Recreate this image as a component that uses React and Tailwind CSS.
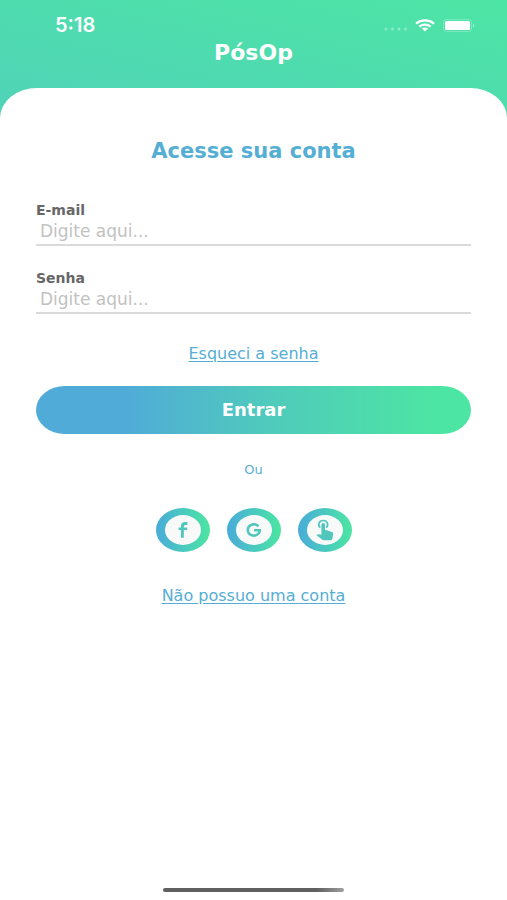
import { useState } from "react";

function StatusBar() {
  return (
    <div className="flex h-10 items-center justify-between pt-[10px] pr-8 pl-[55px] text-white">
      <span className="font-['Inter',sans-serif] text-xl leading-5 font-semibold">5:18</span>
      <div className="flex items-center gap-2">
        <svg width="24" height="12" viewBox="0 0 24 12" fill="#fff" opacity="0.35">
          <circle cx="3" cy="10" r="1.500" />
          <circle cx="9.500" cy="10" r="1.500" />
          <circle cx="16" cy="10" r="1.500" />
          <circle cx="22.500" cy="10" r="1.500" />
        </svg>
        <svg width="20" height="13" viewBox="0 0 20 13" fill="none" stroke="#fff" strokeWidth="2.200">
          <path d="M1 4.600C6 0.300 14 0.300 19 4.600" />
          <path d="M4.300 7.600C7.500 4.900 12.500 4.900 15.700 7.600" />
          <path d="M6.900 9.500C8.600 8 11.400 8 13.100 9.500L10 12.600Z" fill="#fff" stroke="none" />
        </svg>
        <svg width="32" height="13" viewBox="0 0 32 13" fill="#fff">
          <rect x="0.500" y="0.500" width="28" height="12" rx="3" fill="none" stroke="#fff" opacity="0.25" />
          <rect x="2" y="2" width="25" height="9" rx="1.500" />
          <path d="M30 4.500C31.800 5.300 31.800 7.700 30 8.500Z" opacity="0.4" />
        </svg>
      </div>
    </div>
  );
}

function FacebookIcon() {
  return (
    <svg width="10" height="16" viewBox="0 0 10 16" fill="none" stroke="currentColor" strokeWidth="2.900">
      <path d="M4.400 15.800V4.500C4.400 2.400 5.600 1.500 7.300 1.500H9.400" />
      <path d="M0.600 6.800H9.200" strokeWidth="2.500" />
    </svg>
  );
}

function GoogleIcon() {
  return (
    <svg width="16" height="14" viewBox="0 0 16 14" fill="none" stroke="currentColor" strokeWidth="2.600">
      <path d="M12.500 3.200C8.500 -0.500 1.800 1.500 1.800 7C1.800 12.600 9 14.100 12.200 10.900C13.300 9.800 13.900 8.600 13.800 7.300H8" />
    </svg>
  );
}

function TouchIcon() {
  return (
    <svg width="18" height="22" viewBox="0 0 18 22" fill="currentColor">
      <path
        d="M4.300 8.600C1.500 6.300 2.700 1.500 7.200 1.500C11.700 1.500 12.900 6.300 10.100 8.600"
        fill="none"
        stroke="currentColor"
        strokeWidth="1.700"
      />
      <path d="M5.400 5.500C5.400 3.400 9 3.400 9 5.500V11H10.200L15.800 13.100C16.900 13.500 17.400 14.200 17.200 15.200L16.300 19.800C16.100 20.800 15.600 21.300 14.600 21.300H7.800C7.100 21.300 6.600 21.100 6.100 20.600L0.600 16.300L1.500 15.500C1.800 15.200 2.300 15.100 2.800 15.200L5.400 15.700Z" />
    </svg>
  );
}

function Field({ id, label, type, value, onChange }) {
  return (
    <div className="flex flex-col border-b-2 border-[#dadada]">
      <label htmlFor={id} className="text-sm leading-5 font-bold text-[#666666]">
        {label}
      </label>
      <input
        id={id}
        type={type}
        placeholder="Digite aqui..."
        value={value}
        onChange={(e) => onChange(e.target.value)}
        className="h-6 w-full bg-transparent px-1 text-[17px] outline-none placeholder:text-[#c2c2c2]"
      />
    </div>
  );
}

function SocialButton({ label, children }) {
  return (
    <button
      aria-label={label}
      className="flex h-11 w-[54px] items-center justify-center rounded-[50%] bg-linear-to-r from-[#4aabd8] to-[#4de5a0]"
    >
      <span className="flex h-[30px] w-9 items-center justify-center rounded-[50%] bg-[#f8fafa] text-[#50c6bd]">
        {children}
      </span>
    </button>
  );
}

export default function App() {
  const [email, setEmail] = useState("");
  const [password, setPassword] = useState("");

  return (
    <div className="flex min-h-screen flex-col bg-[linear-gradient(to_top_right,#50d2b8_0px,#4de5a5_100%)] bg-[length:100%_120px] bg-no-repeat font-['DejaVu_Sans',sans-serif]">
      <header className="h-22">
        <StatusBar />
        <h1 className="text-center text-[22px] leading-[26px] font-bold text-white">PósOp</h1>
      </header>

      <main className="flex flex-1 flex-col rounded-t-[37px_30px] bg-white px-9 pt-12 text-[#55aed3]">
        <h2 className="text-center text-[21px] leading-[30px] font-bold">Acesse sua conta</h2>

        <form className="flex flex-col pt-[34px]" onSubmit={(e) => e.preventDefault()}>
          <div className="flex flex-col gap-[22px]">
            <Field id="email" label="E-mail" type="email" value={email} onChange={setEmail} />
            <Field id="senha" label="Senha" type="password" value={password} onChange={setPassword} />
          </div>
          <a href="#esqueci" className="mt-7 self-center text-base leading-6 underline underline-offset-2">
            Esqueci a senha
          </a>
          <button
            type="submit"
            className="mt-5 h-12 w-full rounded-[29px/24px] bg-[linear-gradient(to_right,#50abd8_20%,#4fcbbb_54%,#4de5a3_92%)] text-lg font-bold text-white"
          >
            Entrar
          </button>
        </form>

        <p className="pt-[26px] text-center text-[13px] leading-5">Ou</p>

        <div className="flex justify-center gap-[17px] pt-7">
          <SocialButton label="Entrar com Facebook">
            <FacebookIcon />
          </SocialButton>
          <SocialButton label="Entrar com Google">
            <GoogleIcon />
          </SocialButton>
          <SocialButton label="Entrar com biometria">
            <TouchIcon />
          </SocialButton>
        </div>

        <a href="#cadastro" className="mt-8 self-center text-base leading-6 underline underline-offset-2">
          Não possuo uma conta
        </a>

        <div className="mt-auto mb-2 h-1 w-[181px] self-center rounded-full bg-linear-to-r from-[#606060] from-85% to-[#a0a0a0]" />
      </main>
    </div>
  );
}
